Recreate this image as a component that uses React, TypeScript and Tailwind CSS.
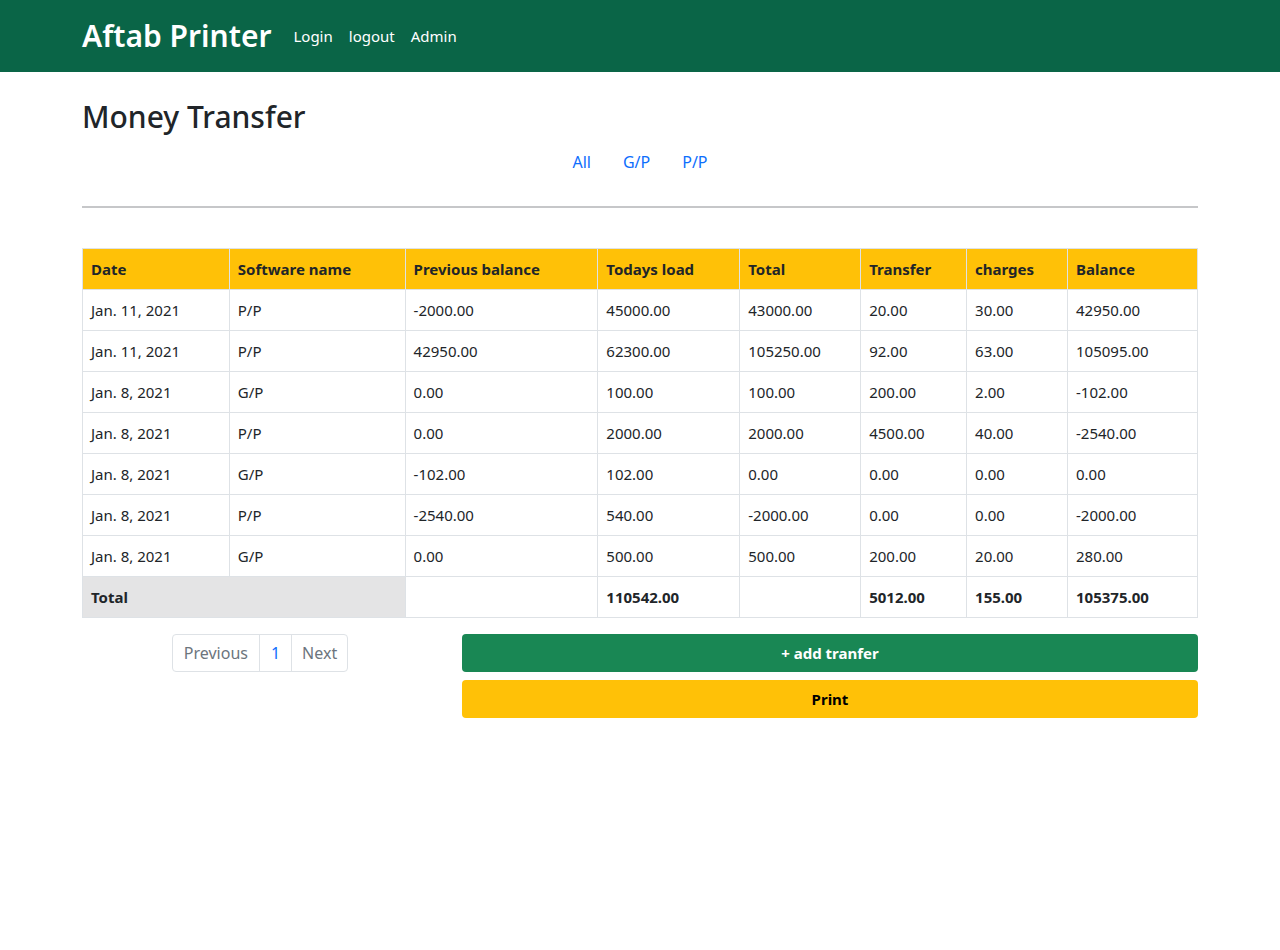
import React from "react";

const rows = [
  ["Jan. 11, 2021", "P/P", "-2000.00", "45000.00", "43000.00", "20.00", "30.00", "42950.00"],
  ["Jan. 11, 2021", "P/P", "42950.00", "62300.00", "105250.00", "92.00", "63.00", "105095.00"],
  ["Jan. 8, 2021", "G/P", "0.00", "100.00", "100.00", "200.00", "2.00", "-102.00"],
  ["Jan. 8, 2021", "P/P", "0.00", "2000.00", "2000.00", "4500.00", "40.00", "-2540.00"],
  ["Jan. 8, 2021", "G/P", "-102.00", "102.00", "0.00", "0.00", "0.00", "0.00"],
  ["Jan. 8, 2021", "P/P", "-2540.00", "540.00", "-2000.00", "0.00", "0.00", "-2000.00"],
  ["Jan. 8, 2021", "G/P", "0.00", "500.00", "500.00", "200.00", "20.00", "280.00"],
];

const heads = ["Date", "Software name", "Previous balance", "Todays load", "Total", "Transfer", "charges", "Balance"];
const widths = [147, 176, 193, 142, 121, 106, 101, 130];

export default function App() {
  return (
    <div className="min-h-[950px] bg-white text-[#212529]" style={{ fontFamily: '"Noto Sans", "Open Sans", sans-serif' }}>
      <nav className="h-[72px] bg-[#0a6547]">
        <div className="mx-auto flex h-full w-[1116px] items-center">
          <span className="mr-[22px] text-[30px] font-semibold leading-none text-white">Aftab Printer</span>
          <div className="flex gap-4 text-[15px] text-white">
            <a>Login</a>
            <a>logout</a>
            <a>Admin</a>
          </div>
        </div>
      </nav>
      <div className="mx-auto w-[1116px]">
        <h2 className="mt-[27px] text-[30px] font-medium leading-[36px]">Money Transfer</h2>
        <div className="mt-[7px] flex justify-center text-[16px] text-[#0d6efd]">
          <a className="px-4 py-2">All</a>
          <a className="px-4 py-2">G/P</a>
          <a className="px-4 py-2">P/P</a>
        </div>
        <div className="mt-[24px] h-[2px] bg-[#c6c7c9]" />
        <table className="mt-[40px] w-full border-collapse text-[15px]">
          <colgroup>
            {widths.map((w, i) => (
              <col key={i} style={{ width: w }} />
            ))}
          </colgroup>
          <thead>
            <tr className="h-[41px] bg-[#ffc107]">
              {heads.map((h) => (
                <th key={h} className="border border-[#dee2e6] px-2 text-left font-bold">
                  {h}
                </th>
              ))}
            </tr>
          </thead>
          <tbody>
            {rows.map((r, i) => (
              <tr key={i} className="h-[41px]">
                {r.map((c, j) => (
                  <td key={j} className="border border-[#dee2e6] px-2">
                    {c}
                  </td>
                ))}
              </tr>
            ))}
            <tr className="h-[41px] font-bold">
              <td colSpan={2} className="border border-[#dee2e6] bg-[#e4e4e5] px-2">Total</td>
              <td className="border border-[#dee2e6] px-2"></td>
              <td className="border border-[#dee2e6] px-2">110542.00</td>
              <td className="border border-[#dee2e6] px-2"></td>
              <td className="border border-[#dee2e6] px-2">5012.00</td>
              <td className="border border-[#dee2e6] px-2">155.00</td>
              <td className="border border-[#dee2e6] px-2">105375.00</td>
            </tr>
          </tbody>
        </table>
        <div className="mt-4 flex gap-6">
          <div className="flex w-[356px] justify-center">
            <div className="flex h-[38px] overflow-hidden rounded-[4px] border border-[#dee2e6] text-[16px]">
              <span className="flex items-center px-[11px] text-[#6c757d]">Previous</span>
              <span className="flex items-center border-l border-[#dee2e6] px-[11px] text-[#0d6efd]">1</span>
              <span className="flex items-center border-l border-[#dee2e6] px-[10px] text-[#6c757d]">Next</span>
            </div>
          </div>
          <div className="flex flex-1 flex-col gap-[8px]">
            <button className="h-[38px] rounded-[4px] bg-[#198754] text-[15px] font-bold text-white">+ add tranfer</button>
            <button className="h-[38px] rounded-[4px] bg-[#ffc107] text-[15px] font-bold text-black">Print</button>
          </div>
        </div>
      </div>
    </div>
  );
}
